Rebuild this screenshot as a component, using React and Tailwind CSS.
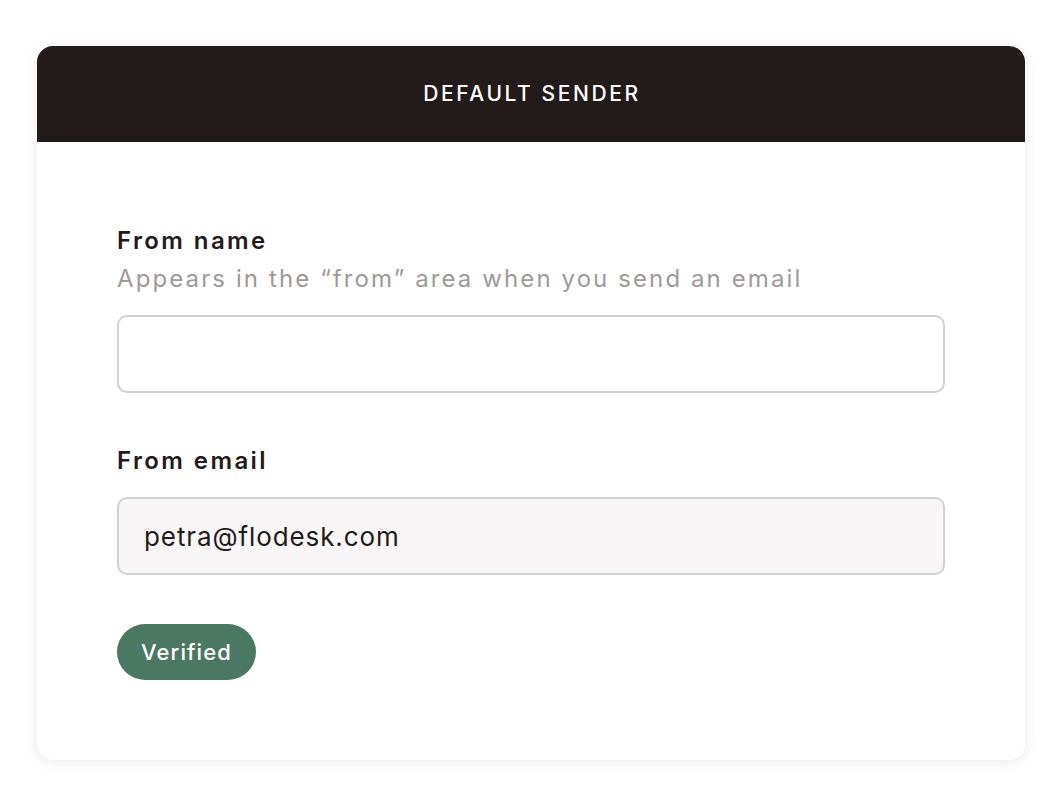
export default function App() {
  return (
    <div className="min-h-screen bg-white pt-[46px] pl-[37px]">
      <div
        className="w-[988px] rounded-[16px] bg-white overflow-hidden shadow-[0_2px_14px_rgba(0,0,0,0.09)]"
        style={{ fontFamily: "Inter, 'Noto Sans', sans-serif" }}
      >
        <div className="h-[96px] bg-[#231b1a] flex items-center justify-center">
          <span className="text-white text-[21px] font-medium tracking-[2.6px] pl-[2px]">DEFAULT SENDER</span>
        </div>
        <div className="px-[80px] pt-[83px] pb-[80px]">
          <div className="text-[24px] leading-[32px] font-semibold tracking-[2.4px] text-[#231b1a]">From name</div>
          <div className="mt-[6px] text-[24px] leading-[32px] tracking-[2.1px] text-[#9f9998] whitespace-nowrap">
            Appears in the “from” area when you send an email
          </div>
          <div className="mt-[20px] h-[78px] rounded-[10px] border-2 border-[#d2d0d0] bg-white"></div>
          <div className="mt-[52px] text-[24px] leading-[32px] font-semibold tracking-[2.4px] text-[#231b1a]">From email</div>
          <div className="mt-[20px] h-[78px] rounded-[10px] border-2 border-[#d2d0d0] bg-[#f8f6f6] flex items-center px-[25px]">
            <span className="text-[26px] tracking-[0.9px] text-[#231b1a]">petra@flodesk.com</span>
          </div>
          <div className="mt-[49px] flex">
            <span className="h-[56px] px-[24px] rounded-full bg-[#4b7862] text-white text-[22px] font-medium tracking-[1.1px] flex items-center">
              Verified
            </span>
          </div>
        </div>
      </div>
    </div>
  );
}
